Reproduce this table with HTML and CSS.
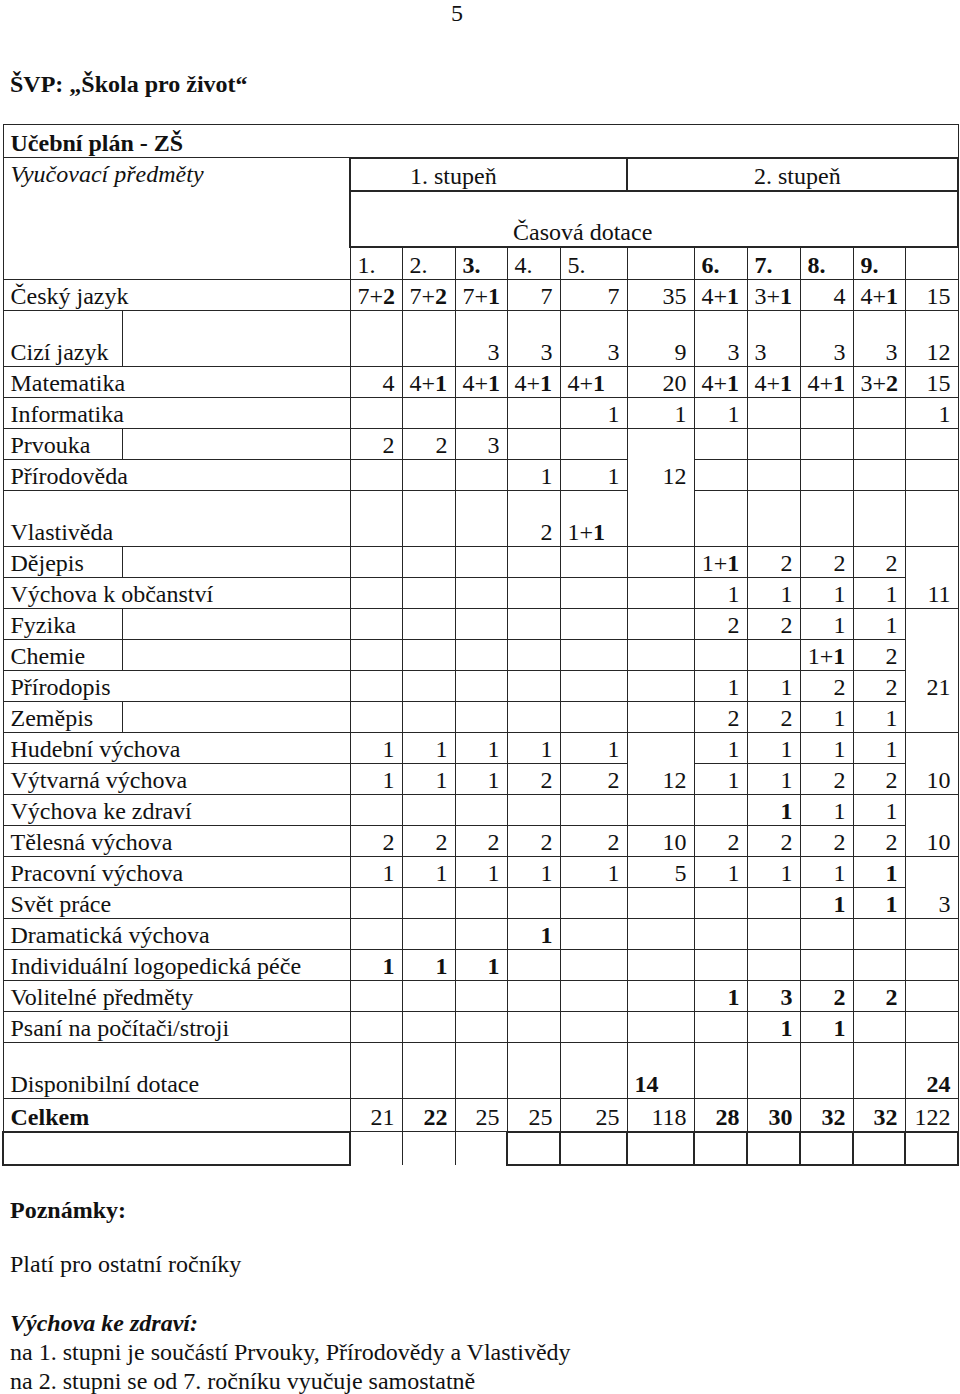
FILE: index.html
```html
<!DOCTYPE html>
<html lang="cs">
<head>
<meta charset="utf-8">
<title>ŠVP: Škola pro život – Učební plán</title>
<link rel="stylesheet" href="styles.css">
</head>
<body>
<div class="page">
  <div class="pagenum">5</div>
  <h1 class="title">ŠVP: „Škola pro život“</h1>

  <table class="plan">
    <colgroup>
      <col class="w-l1"><col class="w-l2">
      <col class="w-52"><col class="w-53"><col class="w-52"><col class="w-53"><col class="w-s">
      <col class="w-s">
      <col class="w-53"><col class="w-53"><col class="w-53"><col class="w-52"><col class="w-53">
    </colgroup>
    <tbody>
      <tr class="hrow">
        <td colspan="13" class="lab strong">Učební plán - ZŠ</td>
      </tr>
      <tr class="hrow">
        <td colspan="2" rowspan="3" class="lab top italic">Vyučovací předměty</td>
        <td colspan="5" class="tk stup1">1. stupeň</td>
        <td colspan="6" class="tk stup2">2. stupeň</td>
      </tr>
      <tr class="tall">
        <td colspan="11" class="tk dotace">Časová dotace</td>
      </tr>
      <tr class="hrow">
        <td class="l">1.</td><td class="l">2.</td><td class="l strong">3.</td><td class="l">4.</td><td class="l">5.</td>
        <td></td>
        <td class="l strong">6.</td><td class="l strong">7.</td><td class="l strong">8.</td><td class="l strong">9.</td>
        <td></td>
      </tr>

      <tr>
        <td colspan="2" class="lab">Český jazyk</td>
        <td class="l">7+<b>2</b></td><td class="l">7+<b>2</b></td><td class="l">7+<b>1</b></td><td>7</td><td>7</td>
        <td>35</td>
        <td class="l">4+<b>1</b></td><td class="l">3+<b>1</b></td><td>4</td><td class="l">4+<b>1</b></td>
        <td>15</td>
      </tr>
      <tr class="tall">
        <td class="lab">Cizí jazyk</td><td></td>
        <td></td><td></td><td>3</td><td>3</td><td>3</td>
        <td>9</td>
        <td>3</td><td class="l">3</td><td>3</td><td>3</td>
        <td>12</td>
      </tr>
      <tr>
        <td colspan="2" class="lab">Matematika</td>
        <td>4</td><td class="l">4+<b>1</b></td><td class="l">4+<b>1</b></td><td class="l">4+<b>1</b></td><td class="l">4+<b>1</b></td>
        <td>20</td>
        <td class="l">4+<b>1</b></td><td class="l">4+<b>1</b></td><td class="l">4+<b>1</b></td><td class="l">3+<b>2</b></td>
        <td>15</td>
      </tr>
      <tr>
        <td colspan="2" class="lab">Informatika</td>
        <td></td><td></td><td></td><td></td><td>1</td>
        <td>1</td>
        <td>1</td><td></td><td></td><td></td>
        <td>1</td>
      </tr>
      <tr>
        <td class="lab">Prvouka</td><td></td>
        <td>2</td><td>2</td><td>3</td><td></td><td></td>
        <td rowspan="3" class="lift-tall">12</td>
        <td></td><td></td><td></td><td></td>
        <td></td>
      </tr>
      <tr>
        <td colspan="2" class="lab">Přírodověda</td>
        <td></td><td></td><td></td><td>1</td><td>1</td>
        <td></td><td></td><td></td><td></td>
        <td></td>
      </tr>
      <tr class="tall">
        <td colspan="2" class="lab">Vlastivěda</td>
        <td></td><td></td><td></td><td>2</td><td class="l">1+<b>1</b></td>
        <td></td><td></td><td></td><td></td>
        <td></td>
      </tr>
      <tr>
        <td class="lab">Dějepis</td><td></td>
        <td></td><td></td><td></td><td></td><td></td>
        <td></td>
        <td class="mid">1+<b>1</b></td><td>2</td><td>2</td><td>2</td>
        <td rowspan="2">11</td>
      </tr>
      <tr>
        <td colspan="2" class="lab">Výchova k občanství</td>
        <td></td><td></td><td></td><td></td><td></td>
        <td></td>
        <td>1</td><td>1</td><td>1</td><td>1</td>
      </tr>
      <tr>
        <td class="lab">Fyzika</td><td></td>
        <td></td><td></td><td></td><td></td><td></td>
        <td></td>
        <td>2</td><td>2</td><td>1</td><td>1</td>
        <td rowspan="4" class="lift-row">21</td>
      </tr>
      <tr>
        <td class="lab">Chemie</td><td></td>
        <td></td><td></td><td></td><td></td><td></td>
        <td></td>
        <td></td><td></td><td class="mid">1+<b>1</b></td><td>2</td>
      </tr>
      <tr>
        <td colspan="2" class="lab">Přírodopis</td>
        <td></td><td></td><td></td><td></td><td></td>
        <td></td>
        <td>1</td><td>1</td><td>2</td><td>2</td>
      </tr>
      <tr>
        <td class="lab">Zeměpis</td><td></td>
        <td></td><td></td><td></td><td></td><td></td>
        <td></td>
        <td>2</td><td>2</td><td>1</td><td>1</td>
      </tr>
      <tr>
        <td colspan="2" class="lab">Hudební výchova</td>
        <td>1</td><td>1</td><td>1</td><td>1</td><td>1</td>
        <td rowspan="2">12</td>
        <td>1</td><td>1</td><td>1</td><td>1</td>
        <td rowspan="2">10</td>
      </tr>
      <tr>
        <td colspan="2" class="lab">Výtvarná výchova</td>
        <td>1</td><td>1</td><td>1</td><td>2</td><td>2</td>
        <td>1</td><td>1</td><td>2</td><td>2</td>
      </tr>
      <tr>
        <td colspan="2" class="lab">Výchova ke zdraví</td>
        <td></td><td></td><td></td><td></td><td></td>
        <td></td>
        <td></td><td class="strong">1</td><td>1</td><td>1</td>
        <td rowspan="2">10</td>
      </tr>
      <tr>
        <td colspan="2" class="lab">Tělesná výchova</td>
        <td>2</td><td>2</td><td>2</td><td>2</td><td>2</td>
        <td>10</td>
        <td>2</td><td>2</td><td>2</td><td>2</td>
      </tr>
      <tr>
        <td colspan="2" class="lab">Pracovní výchova</td>
        <td>1</td><td>1</td><td>1</td><td>1</td><td>1</td>
        <td>5</td>
        <td>1</td><td>1</td><td>1</td><td class="strong">1</td>
        <td rowspan="2">3</td>
      </tr>
      <tr>
        <td colspan="2" class="lab">Svět práce</td>
        <td></td><td></td><td></td><td></td><td></td>
        <td></td>
        <td></td><td></td><td class="strong">1</td><td class="strong">1</td>
      </tr>
      <tr>
        <td colspan="2" class="lab">Dramatická výchova</td>
        <td></td><td></td><td></td><td class="strong">1</td><td></td>
        <td></td>
        <td></td><td></td><td></td><td></td>
        <td></td>
      </tr>
      <tr>
        <td colspan="2" class="lab">Individuální logopedická péče</td>
        <td class="strong">1</td><td class="strong">1</td><td class="strong">1</td><td></td><td></td>
        <td></td>
        <td></td><td></td><td></td><td></td>
        <td></td>
      </tr>
      <tr>
        <td colspan="2" class="lab">Volitelné předměty</td>
        <td></td><td></td><td></td><td></td><td></td>
        <td></td>
        <td class="strong">1</td><td class="strong">3</td><td class="strong">2</td><td class="strong">2</td>
        <td></td>
      </tr>
      <tr>
        <td colspan="2" class="lab">Psaní na počítači/stroji</td>
        <td></td><td></td><td></td><td></td><td></td>
        <td></td>
        <td></td><td class="strong">1</td><td class="strong">1</td><td></td>
        <td></td>
      </tr>
      <tr class="tall">
        <td colspan="2" class="lab">Disponibilní dotace</td>
        <td></td><td></td><td></td><td></td><td></td>
        <td class="l strong">14</td>
        <td></td><td></td><td></td><td></td>
        <td class="strong">24</td>
      </tr>
      <tr class="hrow">
        <td colspan="2" class="lab strong">Celkem</td>
        <td>21</td><td class="strong">22</td><td>25</td><td>25</td><td>25</td>
        <td>118</td>
        <td class="strong">28</td><td class="strong">30</td><td class="strong">32</td><td class="strong">32</td>
        <td>122</td>
      </tr>
      <tr class="hrow last">
        <td colspan="2" class="tk"></td>
        <td class="open"></td><td class="open"></td><td class="open"></td>
        <td class="tk"></td><td class="tk"></td><td class="tk"></td><td class="tk"></td>
        <td class="tk"></td><td class="tk"></td><td class="tk"></td><td class="tk"></td>
      </tr>
    </tbody>
  </table>

  <div class="notes">
    <p class="note-head">Poznámky:</p>
    <p class="note-plain">Platí pro ostatní ročníky</p>
    <p class="note-sub">Výchova ke zdraví:</p>
    <p class="note-line">na 1. stupni je součástí Prvouky, Přírodovědy a Vlastivědy</p>
    <p class="note-line">na 2. stupni se od 7. ročníku vyučuje samostatně</p>
  </div>
</div>
</body>
</html>
```

FILE: styles.css
```css
* {
  box-sizing: border-box;
}

body {
  margin: 0;
  background: #ffffff;
  color: #111111;
  font-family: "Liberation Serif", "Times New Roman", serif;
  font-size: 24px;
}

.page {
  padding-left: 2px;
}

.pagenum {
  text-align: center;
  padding-right: 48px;
  line-height: 26px;
}

.title {
  margin: 45px 0 0;
  padding-left: 8px;
  font-size: 24px;
  font-weight: bold;
  line-height: 26px;
}

/* ---------- table ---------- */
.plan {
  margin-top: 27px;
  border-collapse: collapse;
  table-layout: fixed;
  width: 955px;
}

.w-l1 { width: 119px; }
.w-l2 { width: 228px; }
.w-52 { width: 52px; }
.w-53 { width: 53px; }
.w-s  { width: 67px; }

.plan td {
  border: 1px solid #262626;
  padding: 0 7px 1px 7px;
  height: 31px;
  line-height: 26px;
  vertical-align: bottom;
  text-align: right;
  white-space: nowrap;
}

.plan tr.hrow td {
  height: 33px;
}

.plan tr.tall td {
  height: 56px;
}

.plan td.lab {
  text-align: left;
  padding-left: 7px;
}

.plan td.l {
  text-align: left;
}

.plan td.mid {
  text-align: center;
  padding: 0 2px 1px 2px;
}

.plan td.top {
  vertical-align: top;
  padding-top: 3px;
}

.italic {
  font-style: italic;
}

.strong,
.plan b {
  font-weight: bold;
}

.plan td.tk {
  border-width: 2px;
}

.plan td.stup1 {
  text-align: left;
  padding-left: 59px;
}

.plan td.stup2 {
  text-align: left;
  padding-left: 126px;
}

.plan td.dotace {
  text-align: left;
  padding-left: 162px;
}

/* merged sum cells whose figure sits higher than the bottom row */
.plan td.lift-tall {
  padding-bottom: 57px;
}

.plan td.lift-row {
  padding-bottom: 32px;
}

.plan tr.last td.open {
  border-bottom: none;
}

/* ---------- notes ---------- */
.notes {
  padding-left: 8px;
}

.notes p {
  margin: 0;
  line-height: 29px;
}

.note-head {
  margin-top: 30px !important;
  font-weight: bold;
}

.note-plain {
  margin-top: 25px !important;
}

.note-sub {
  margin-top: 30px !important;
  font-weight: bold;
  font-style: italic;
}
```
